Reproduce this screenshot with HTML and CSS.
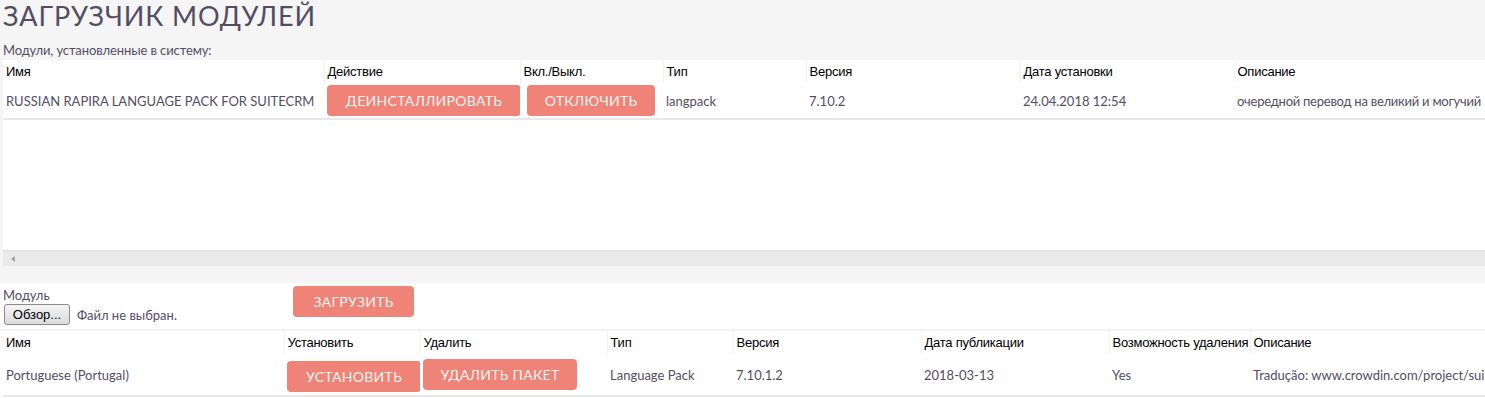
FILE: index.html
```html
<!DOCTYPE html>
<html lang="ru">

<head>
    <meta charset="UTF-8">
    <meta name="viewport" content="width=device-width, initial-scale=1.0">
    <title>Загрузчик модулей</title>

    <link rel="stylesheet" href="styles.css">
</head>

<body>
    <h2 class="module-title">ЗАГРУЗЧИК МОДУЛЕЙ</h2>
    <div class="caption">Модули, установленные в систему:</div>

    <div class="installed-wrap">
        <div class="installed-scroll">
            <table class="list installed">
                <colgroup>
                    <col style="width: 321px">
                    <col style="width: 196px">
                    <col style="width: 143px">
                    <col style="width: 143px">
                    <col style="width: 214px">
                    <col style="width: 214px">
                    <col style="width: 320px">
                </colgroup>
                <thead>
                    <tr>
                        <th>Имя</th>
                        <th>Действие</th>
                        <th>Вкл./Выкл.</th>
                        <th>Тип</th>
                        <th>Версия</th>
                        <th>Дата установки</th>
                        <th>Описание</th>
                    </tr>
                </thead>
                <tbody>
                    <tr>
                        <td>RUSSIAN RAPIRA LANGUAGE PACK FOR SUITECRM</td>
                        <td><button class="btn btn-wide">Деинсталлировать</button></td>
                        <td><button class="btn">Отключить</button></td>
                        <td>langpack</td>
                        <td>7.10.2</td>
                        <td>24.04.2018 12:54</td>
                        <td class="desc">очередной перевод на великий и могучий</td>
                    </tr>
                </tbody>
            </table>
        </div>
        <div class="fake-scrollbar"><span class="arrow-left"></span></div>
    </div>

    <section class="upload">
        <form class="upload-form">
            <div class="file-field">
                <label>Модуль</label>
                <div class="file-row">
                    <span class="file-btn">Обзор...</span>
                    <span class="file-name">Файл не выбран.</span>
                </div>
            </div>
            <button type="button" class="btn btn-upload">Загрузить</button>
        </form>

        <table class="list packages">
            <colgroup>
                <col style="width: 281px">
                <col style="width: 136px">
                <col style="width: 187px">
                <col style="width: 126px">
                <col style="width: 188px">
                <col style="width: 188px">
                <col style="width: 141px">
                <col style="width: 320px">
            </colgroup>
            <thead>
                <tr>
                    <th>Имя</th>
                    <th>Установить</th>
                    <th>Удалить</th>
                    <th>Тип</th>
                    <th>Версия</th>
                    <th>Дата публикации</th>
                    <th>Возможность удаления</th>
                    <th>Описание</th>
                </tr>
            </thead>
            <tbody>
                <tr>
                    <td>Portuguese (Portugal)</td>
                    <td><button class="btn btn-install">Установить</button></td>
                    <td><button class="btn btn-remove">Удалить пакет</button></td>
                    <td>Language Pack</td>
                    <td>7.10.1.2</td>
                    <td>2018-03-13</td>
                    <td>Yes</td>
                    <td>Tradução: www.crowdin.com/project/suitecrmtranslations</td>
                </tr>
            </tbody>
        </table>
    </section>
</body>

</html>
```

FILE: styles.css
```css
* {
    box-sizing: border-box;
}

body {
    margin: 0;
    background: #f5f5f5;
    font-family: Lato, "Open Sans", sans-serif;
    font-size: 13px;
    color: #534d64;
    overflow: hidden;
}

.module-title {
    margin: 0;
    padding-left: 3px;
    font-size: 27px;
    font-weight: 400;
    line-height: 31px;
    letter-spacing: 0.9px;
    color: #534d64;
}

.caption {
    margin-top: 10px;
    padding-left: 3px;
    line-height: 19px;
    letter-spacing: -0.1px;
}

/* installed modules */
.installed-wrap {
    margin-left: 3px;
    height: 206px;
    background: white;
    display: flex;
    flex-direction: column;
}

.installed-scroll {
    flex: 1 1 0%;
    overflow: hidden;
}

.fake-scrollbar {
    height: 16px;
    background: #e9e9e9;
    border-top: 1px solid #e2e2e2;
    display: flex;
    align-items: center;
    padding-left: 8px;
}

.arrow-left {
    width: 0;
    height: 0;
    border-top: 3px solid transparent;
    border-bottom: 3px solid transparent;
    border-right: 4px solid #a3a3a3;
}

table.list {
    table-layout: fixed;
    border-collapse: collapse;
    width: 1551px;
}

.list th {
    text-align: left;
    font-family: "Liberation Sans", Arial, sans-serif;
    font-weight: 400;
    font-size: 13px;
    letter-spacing: -0.25px;
    color: black;
    height: 23px;
    padding: 0 3px;
    border-left: 1px solid #f2f2f2;
    white-space: nowrap;
    overflow: hidden;
}

.list th:first-child {
    border-left: none;
}

.list td {
    padding: 0 3px;
    white-space: nowrap;
    overflow: hidden;
    border-bottom: 2px solid #e8e8e8;
}

.installed td {
    height: 36px;
}

.installed td.desc {
    letter-spacing: -0.25px;
}

.btn {
    appearance: none;
    border: none;
    outline: none;
    background: #f08377;
    color: #f7f3f2;
    font-family: Lato, "Open Sans", sans-serif;
    font-size: 14px;
    letter-spacing: 0.3px;
    text-transform: uppercase;
    height: 31px;
    padding: 0 16px;
    border-radius: 4px;
    cursor: pointer;
    display: block;
}

.installed .btn-wide {
    width: 194px;
}

.installed td:nth-child(3) .btn {
    width: 128px;
    margin-left: 4px;
}

/* upload section */
.upload {
    margin-top: 17px;
    background: white;
    padding-top: 3px;
    height: 120px;
}

.upload-form {
    display: flex;
    align-items: flex-start;
    height: 45px;
    border-bottom: 2px solid #f2f2f2;
}

.file-field {
    width: 293px;
    padding-left: 3px;
}

.file-field label {
    display: block;
    line-height: 18px;
}

.file-row {
    display: flex;
    align-items: center;
    gap: 7px;
    margin-left: 1px;
}

.file-btn {
    width: 66px;
    height: 21px;
    border: 1px solid #8a8a8a;
    border-radius: 3px;
    background: linear-gradient(#f4f4f4, #dcdcdc);
    font-family: "Liberation Sans", Arial, sans-serif;
    font-size: 13px;
    color: black;
    display: flex;
    align-items: center;
    justify-content: center;
}

.btn-upload {
    width: 121px;
}

.packages {
    margin-left: 3px;
}

.packages td {
    height: 42px;
    padding-top: 1px;
}

.packages .btn-install {
    width: 134px;
    margin-top: 3px;
}

.packages .btn-remove {
    width: 154px;
    margin-top: -1px;
}
```
